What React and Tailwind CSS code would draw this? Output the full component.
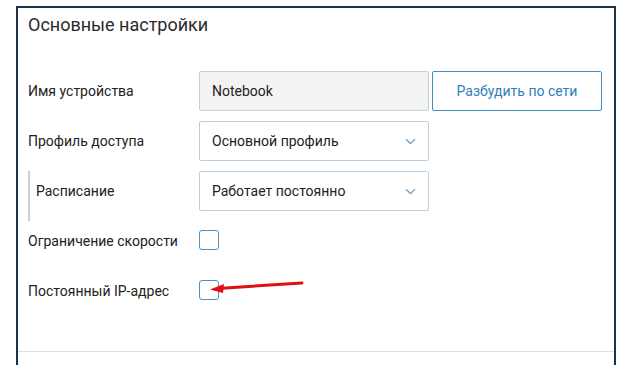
import React from "react"

function Chevron() {
  return (
    <svg width="11" height="7" viewBox="0 0 11 7" fill="none">
      <path d="M1 1.2L5.5 5.5L10 1.2" stroke="#7da6c6" strokeWidth="1.4" />
    </svg>
  )
}

function Select({ value }) {
  return (
    <div className="w-[230px] h-[40px] bg-white border border-[#b9d0e0] rounded-[2px] flex items-center justify-between pl-[12px] pr-[12px] text-[14px] text-[#222]">
      <span>{value}</span>
      <Chevron />
    </div>
  )
}

function Checkbox() {
  return <div className="w-[20px] h-[20px] border-[1.5px] border-[#4b91c2] rounded-[3px] bg-white" />
}

export default function App() {
  return (
    <div className="relative w-[629px] h-[365px] overflow-hidden bg-white" style={{ fontFamily: "Roboto, 'Liberation Sans', sans-serif" }}>
      <div className="ml-[16px] mt-[6px] w-[600px] h-[400px] border-2 border-b-0 border-[#1d3347] pl-[10px]">
        <h2 className="pt-[5px] text-[18px] leading-[24px] text-[#2a2a2a]">Основные настройки</h2>

        <div className="mt-[34px] flex flex-col text-[14px] text-[#222]">
          <div className="h-[50px] flex items-start">
            <div className="w-[171px] h-[40px] flex items-center">Имя устройства</div>
            <div className="w-[230px] h-[40px] bg-[#f3f3f3] border border-[#bcd2e1] rounded-[2px] flex items-center pl-[12px]">Notebook</div>
            <button className="ml-[3px] w-[170px] h-[40px] border border-[#3f8dc4] rounded-[2px] text-[#2f7fb8] text-[14px] bg-white">Разбудить по сети</button>
          </div>

          <div className="h-[50px] flex items-start">
            <div className="w-[171px] h-[40px] flex items-center">Профиль доступа</div>
            <Select value="Основной профиль" />
          </div>

          <div className="h-[50px] flex items-start border-l-2 border-[#cfcfcf]">
            <div className="w-[169px] h-[40px] flex items-center pl-[6px]">Расписание</div>
            <Select value="Работает постоянно" />
          </div>

          <div className="h-[50px] flex items-start">
            <div className="w-[171px] h-[40px] flex items-center">Ограничение скорости</div>
            <div className="h-[38px] flex items-center"><Checkbox /></div>
          </div>

          <div className="h-[50px] flex items-start">
            <div className="w-[171px] h-[40px] flex items-center">Постоянный IP-адрес</div>
            <div className="h-[38px] flex items-center"><Checkbox /></div>
          </div>
        </div>

        <div className="mt-[30px] -ml-[10px] h-px bg-[#d3e2ec]" />
      </div>

      {/* red annotation arrow */}
      <svg className="absolute left-0 top-0 pointer-events-none" width="629" height="365">
        <path d="M302 283 L222 288.2" stroke="#e01010" strokeWidth="3" strokeLinecap="round" />
        <path d="M210 289.5 L224 284 L223 293 Z" fill="#e01010" />
      </svg>
    </div>
  )
}
